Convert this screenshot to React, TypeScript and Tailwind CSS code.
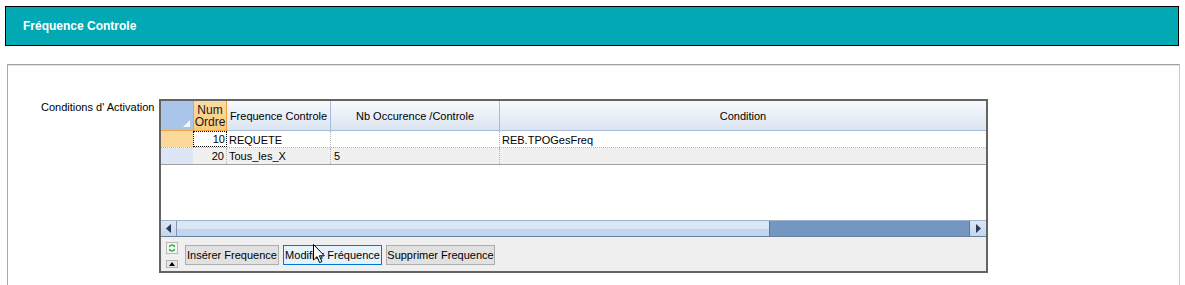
import React from "react";

const cols = {
  sel: "w-[32px]",
  num: "w-[34px]",
  freq: "w-[104px]",
  nb: "w-[169px]",
};

function RefreshIcon() {
  return (
    <svg width="12" height="12" viewBox="0 0 12 12">
      <rect x="0.5" y="0.5" width="11" height="11" fill="#f4f4f4" stroke="#b9b9b9" />
      <path d="M3.4 5 A2.6 2.6 0 0 1 8.2 4.4" fill="none" stroke="#2fb64a" strokeWidth="1.5" />
      <path d="M7 3.4 L9.2 3 L8.9 5.4 Z" fill="#2fb64a" />
      <path d="M8.6 7 A2.6 2.6 0 0 1 3.8 7.6" fill="none" stroke="#2fb64a" strokeWidth="1.5" />
      <path d="M5 8.6 L2.8 9 L3.1 6.6 Z" fill="#2fb64a" />
    </svg>
  );
}

function Cursor() {
  return (
    <svg width="13" height="20" viewBox="0 0 13 20" className="absolute left-[313px] top-[244px]">
      <path
        d="M0.5 0.5 L0.5 16 L4 12.6 L6.6 18.6 L8.9 17.6 L6.4 11.8 L11.4 11.8 Z"
        fill="#ffffff"
        stroke="#000000"
        strokeWidth="1"
      />
    </svg>
  );
}

export default function App() {
  return (
    <div className="relative w-[1185px] h-[285px] bg-white overflow-hidden font-['Liberation_Sans',Arial,sans-serif] text-black">
      {/* Title bar */}
      <div className="ml-[5px] mt-[6px] w-[1174px] h-[40px] border border-black bg-[#02a9b5] flex items-center pl-[17px] pb-[1px]">
        <span className="text-white font-bold text-[12px]">Fréquence Controle</span>
      </div>

      {/* Panel */}
      <div className="ml-[7px] mt-[18px] w-[1173px] h-[240px] border-t border-l border-r border-t-[#a0a0a0] border-l-[#a8a8a8] border-r-[#c8c8c8] shadow-[inset_0_1px_0_#e4e4e4] pt-[34px] flex">
        <div className="w-[151px] pl-[33px] pt-[2px] text-[11px] leading-[13px] whitespace-nowrap">
          Conditions d' Activation
        </div>

        {/* Grid */}
        <div className="w-[829px] h-[174px] border-2 border-[#646464] flex flex-col text-[11px]">
          {/* Header row */}
          <div className="flex h-[30px] bg-gradient-to-b from-[#f8fafd] to-[#dbe4f1] border-b border-[#a6bcd8]">
            <div className={`${cols.sel} relative bg-[#a9c5ea] border-b border-[#f4a640] -mb-px`}>
              <svg width="7" height="7" viewBox="0 0 7 7" className="absolute right-[3px] bottom-[3px]">
                <path d="M7 0 L7 7 L0 7 Z" fill="#ffffff" fillOpacity="0.85" />
              </svg>
            </div>
            <div className={`${cols.num} bg-gradient-to-b from-[#fcdca2] to-[#f8ca7c] border-x border-[#f2a03a] border-b -mb-px border-b-[#f4a640] flex flex-col items-center justify-center pt-[1px] text-[12px] leading-[12px] text-[#1a1a1a]`}>
              <span>Num</span>
              <span>Ordre</span>
            </div>
            <div className={`${cols.freq} border-r border-[#a6bcd8] flex items-center justify-center pt-[2px]`}>
              Frequence Controle
            </div>
            <div className={`${cols.nb} border-r border-[#a6bcd8] flex items-center justify-center pt-[2px]`}>
              Nb Occurence /Controle
            </div>
            <div className="flex-1 flex items-center justify-center pt-[2px]">Condition</div>
          </div>

          {/* Row 1 */}
          <div className="flex h-[17px] bg-white border-b border-dotted border-[#b4b4b4]">
            <div className={`${cols.sel} bg-[#fcd89b]`} />
            <div className={`${cols.num} border border-dotted border-black bg-white flex items-center justify-end pr-[1px] pt-[1px]`}>
              10
            </div>
            <div className={`${cols.freq} border-r border-dotted border-[#b4b4b4] flex items-center pl-[2px] pt-[2px]`}>
              REQUETE
            </div>
            <div className={`${cols.nb} border-r border-dotted border-[#b4b4b4]`} />
            <div className="flex-1 flex items-center pl-[2px] pt-[2px]">REB.TPOGesFreq</div>
          </div>

          {/* Row 2 */}
          <div className="flex h-[17px] bg-[#f0f0f0] border-b border-[#a0a0a0]">
            <div className={`${cols.sel} bg-[#dce6f4]`} />
            <div className={`${cols.num} border-r border-dotted border-[#b4b4b4] flex items-center justify-end pr-[2px] pt-[1px]`}>
              20
            </div>
            <div className={`${cols.freq} border-r border-dotted border-[#b4b4b4] flex items-center pl-[2px] pt-[1px]`}>
              Tous_les_X
            </div>
            <div className={`${cols.nb} border-r border-dotted border-[#b4b4b4] flex items-center pl-[3px] pt-[1px]`}>
              5
            </div>
            <div className="flex-1" />
          </div>

          {/* Empty area */}
          <div className="flex-1 bg-white" />

          {/* Horizontal scrollbar */}
          <div className="flex h-[17px] border-b border-[#6a7f9c] border-t border-t-[#9fb3cd]">
            <div className="w-[16px] bg-gradient-to-b from-[#dbe7f6] to-[#c3d6ee] border-r border-[#7f96b6] flex items-center justify-center">
              <svg width="5" height="9" viewBox="0 0 5 9">
                <path d="M5 0 L0 4.5 L5 9 Z" fill="#2c3a55" />
              </svg>
            </div>
            <div className="w-[592px] flex flex-col">
              <div className="flex-1 bg-[#d9e6f6]" />
              <div className="flex-1 bg-[#c1d5ef]" />
            </div>
            <div className="flex-1 bg-[#7397c0] border-x border-[#5b7aa2]" />
            <div className="w-[16px] bg-gradient-to-b from-[#dbe7f6] to-[#c3d6ee] flex items-center justify-center">
              <svg width="5" height="9" viewBox="0 0 5 9">
                <path d="M0 0 L5 4.5 L0 9 Z" fill="#2c3a55" />
              </svg>
            </div>
          </div>

          {/* Footer */}
          <div className="h-[34px] bg-[#efefef] flex items-start pl-[5px]">
            <div className="flex flex-col gap-[6px] pt-[5px]">
              <RefreshIcon />
              <div className="w-[12px] h-[8px] bg-[#e8e8e8] border border-[#b4b4b4] flex items-center justify-center">
                <svg width="6" height="4" viewBox="0 0 6 4">
                  <path d="M0 4 L3 0 L6 4 Z" fill="#000000" />
                </svg>
              </div>
            </div>
            <div className="flex gap-[4px] ml-[7px] mt-[8px] text-[11px]">
              <button className="w-[94px] h-[20px] bg-[#e1e1e1] border border-[#adadad] leading-none pt-[1px]">
                Insérer Frequence
              </button>
              <button className="w-[99px] h-[20px] bg-[#e5f1fb] border border-[#0078d7] leading-none pt-[1px]">
                Modifier Fréquence
              </button>
              <button className="w-[109px] h-[20px] bg-[#e1e1e1] border border-[#adadad] leading-none pt-[1px]">
                Supprimer Frequence
              </button>
            </div>
          </div>
        </div>
      </div>

      <Cursor />
    </div>
  );
}
